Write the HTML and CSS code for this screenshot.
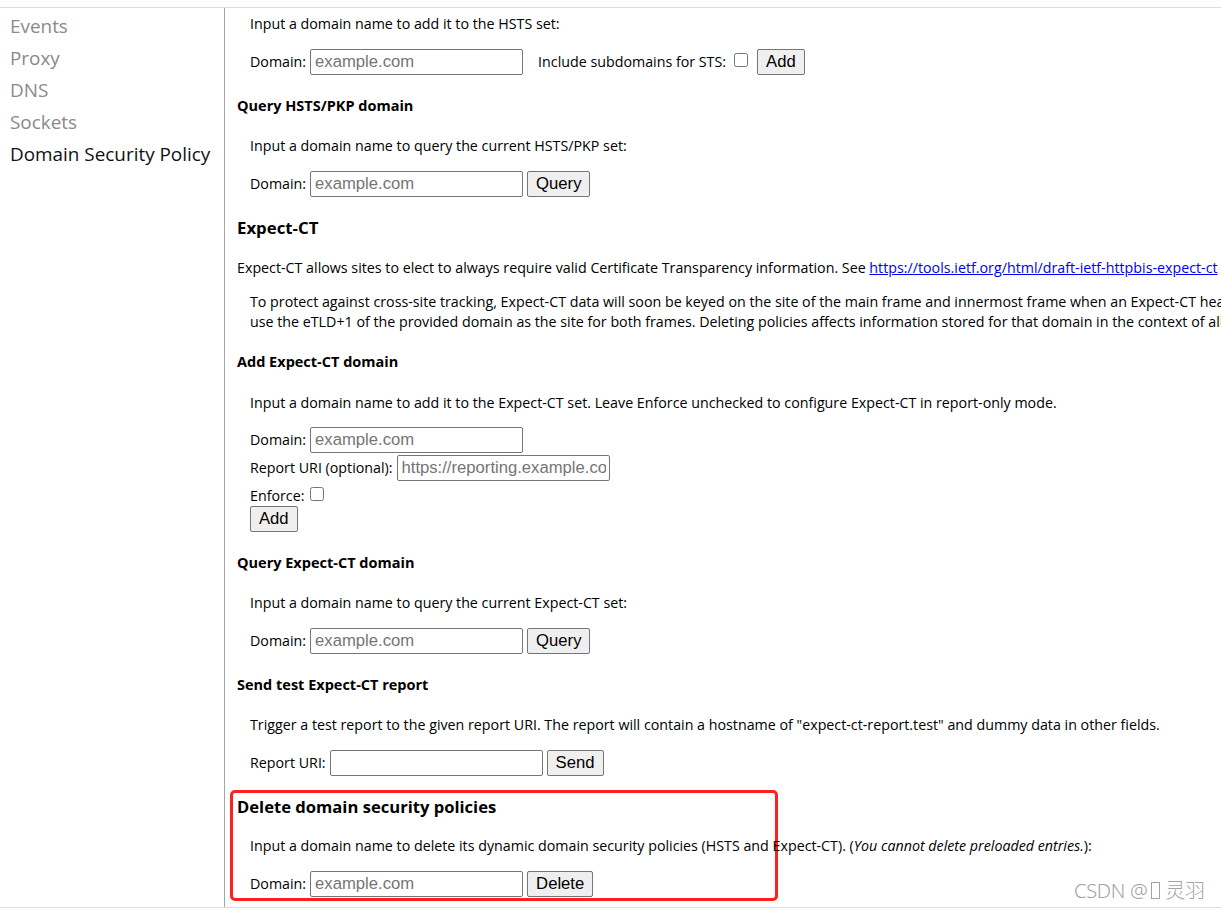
FILE: index.html
```html
<!DOCTYPE html>
<html lang="en">
<head>
<meta charset="utf-8">
<title>net-internals</title>
<link rel="stylesheet" href="styles.css">
</head>
<body>
<div class="frame">
  <nav class="sidebar">
    <div class="nav-item">Events</div>
    <div class="nav-item">Proxy</div>
    <div class="nav-item">DNS</div>
    <div class="nav-item">Sockets</div>
    <div class="nav-item nav-item-active">Domain Security Policy</div>
  </nav>
  <main class="content">
    <p class="text indent first">Input a domain name to add it to the HSTS set:</p>
    <div class="row indent">
      <span class="lbl">Domain:</span>
      <input class="field" type="text" placeholder="example.com">
      <span class="lbl lbl-sts">Include subdomains for STS:</span>
      <input class="check check-sts" type="checkbox">
      <button class="btn">Add</button>
    </div>

    <h4 class="h4">Query HSTS/PKP domain</h4>
    <p class="text indent">Input a domain name to query the current HSTS/PKP set:</p>
    <div class="row indent">
      <span class="lbl">Domain:</span>
      <input class="field" type="text" placeholder="example.com">
      <button class="btn">Query</button>
    </div>

    <h3 class="h3">Expect-CT</h3>
    <p class="text after-h3">Expect-CT allows sites to elect to always require valid Certificate Transparency information. See <a class="link" href="#">https://tools.ietf.org/html/draft-ietf-httpbis-expect-ct</a> for more information.</p>
    <p class="text indent note">To protect against cross-site tracking, Expect-CT data will soon be keyed on the site of the main frame and innermost frame when an Expect-CT header is received. When deleting or querying Expect-CT data, this page will<br>use the eTLD+1 of the provided domain as the site for both frames. Deleting policies affects information stored for that domain in the context of all sites.</p>

    <h4 class="h4 after-note">Add Expect-CT domain</h4>
    <p class="text indent gap-21">Input a domain name to add it to the Expect-CT set. Leave Enforce unchecked to configure Expect-CT in report-only mode.</p>
    <div class="row indent gap-14">
      <span class="lbl">Domain:</span>
      <input class="field" type="text" placeholder="example.com">
    </div>
    <div class="row indent gap-2">
      <span class="lbl">Report URI (optional):</span>
      <input class="field" type="text" placeholder="https://reporting.example.com">
    </div>
    <div class="enforce indent">
      <span class="lbl">Enforce:</span>
      <input class="check check-enforce" type="checkbox">
    </div>
    <div class="row indent gap-0">
      <button class="btn">Add</button>
    </div>

    <h4 class="h4">Query Expect-CT domain</h4>
    <p class="text indent">Input a domain name to query the current Expect-CT set:</p>
    <div class="row indent">
      <span class="lbl">Domain:</span>
      <input class="field" type="text" placeholder="example.com">
      <button class="btn">Query</button>
    </div>

    <h4 class="h4">Send test Expect-CT report</h4>
    <p class="text indent">Trigger a test report to the given report URI. The report will contain a hostname of "expect-ct-report.test" and dummy data in other fields.</p>
    <div class="row indent">
      <span class="lbl">Report URI:</span>
      <input class="field" type="text">
      <button class="btn">Send</button>
    </div>

    <section class="highlight">
      <h3 class="h3 h3-boxed">Delete domain security policies</h3>
      <p class="text indent gap-17">Input a domain name to delete its dynamic domain security policies (HSTS and Expect-CT). (<i>You cannot delete preloaded entries.</i>):</p>
      <div class="row indent">
        <span class="lbl">Domain:</span>
        <input class="field" type="text" placeholder="example.com">
        <button class="btn">Delete</button>
      </div>
    </section>
  </main>
</div>
<div class="watermark">CSDN @<span class="tofu"></span> 灵羽</div>
</body>
</html>
```

FILE: styles.css
```css
html, body {
  margin: 0;
  padding: 0;
  background: #ffffff;
}

body {
  font-family: "Open Sans", "Noto Sans", sans-serif;
  font-size: 14.25px;
  color: #000000;
  width: 1221px;
  height: 910px;
  overflow: hidden;
  position: relative;
}

.frame {
  margin-top: 7px;
  height: 901px;
  box-sizing: border-box;
  border-top: 1px solid #dcdcdc;
  border-bottom: 1px solid #dcdcdc;
  display: flex;
}

.sidebar {
  width: 225px;
  flex: none;
  box-sizing: border-box;
  border-right: 1px solid #a6a6a6;
  padding-top: 2px;
}

.nav-item {
  padding-left: 10px;
  font-size: 18.9px;
  line-height: 32px;
  height: 32px;
  color: #8a8a8a;
  white-space: nowrap;
}

.nav-item-active {
  color: #111111;
}

.content {
  flex: 1;
  min-width: 0;
  overflow: hidden;
  padding-left: 12px;
}

.text {
  margin: 20px 0 0 0;
  line-height: 20px;
  white-space: nowrap;
}

.indent {
  margin-left: 13px;
}

.first {
  margin-top: 6px;
}

.after-h3 {
  margin-top: 18px;
}

.note {
  margin-top: 14px;
}

.gap-21 { margin-top: 21px; }
.gap-17 { margin-top: 17px; }
.gap-14 { margin-top: 14px; }
.gap-2 { margin-top: 2px; }
.gap-0 { margin-top: 0; }

.link {
  color: #0000ee;
  text-decoration: underline;
}

.h4 {
  margin: 21px 0 0 0;
  font-size: 14.5px;
  font-weight: 700;
  line-height: 20px;
  white-space: nowrap;
}

.after-note {
  margin-top: 20px;
}

.h3 {
  margin: 19px 0 0 0;
  font-size: 16.8px;
  font-weight: 700;
  line-height: 24px;
  white-space: nowrap;
}

.h3-boxed {
  margin-top: 2px;
  font-size: 16.6px;
}

.row {
  margin-top: 15px;
  height: 26px;
  display: flex;
  align-items: center;
  gap: 4px;
  white-space: nowrap;
}

.row.gap-14 { margin-top: 14px; }
.row.gap-2 { margin-top: 2px; }
.row.gap-0 { margin-top: 0; }

.lbl {
  line-height: 20px;
}

.lbl-sts {
  margin-left: 11px;
}

.field {
  width: 213px;
  height: 26px;
  box-sizing: border-box;
  margin: 0;
  padding: 0 3px 0 4px;
  border: 1px solid #767676;
  border-radius: 2px;
  background: #ffffff;
  font-family: "Liberation Sans", Arial, sans-serif;
  font-size: 16.67px;
  color: #000000;
}

.field::placeholder {
  color: #757575;
}

.btn {
  height: 26px;
  box-sizing: border-box;
  margin: 0;
  padding: 0 8px;
  border: 1px solid #767676;
  border-radius: 2px;
  background: #efefef;
  font-family: "Liberation Sans", Arial, sans-serif;
  font-size: 16.67px;
  color: #000000;
  line-height: 24px;
}

.check {
  width: 14px;
  height: 14px;
  margin: 0;
  box-sizing: border-box;
}

.check-sts {
  align-self: flex-start;
  margin-top: 4px;
  margin-left: 4px;
  margin-right: 5px;
}

.enforce {
  margin-top: 5px;
  height: 20px;
  display: flex;
  align-items: flex-start;
  line-height: 20px;
}

.check-enforce {
  margin-top: 1px;
  margin-left: 6px;
}

.highlight {
  margin: 14px 0 0 -7px;
  width: 548px;
  box-sizing: border-box;
  border: 3px solid #ff1f1f;
  border-radius: 5px;
  padding: 0 0 1px 4px;
  overflow: visible;
}

.watermark {
  position: absolute;
  left: 1074px;
  top: 877px;
  font-family: "Noto Sans", "Noto Sans CJK SC", sans-serif;
  font-size: 20px;
  font-weight: 300;
  line-height: 28px;
  color: #a3a3a3;
  white-space: nowrap;
  letter-spacing: -0.3px;
}

.tofu {
  display: inline-block;
  width: 7px;
  height: 15px;
  margin-left: 4px;
  border: 1px solid #a3a3a3;
  vertical-align: -1px;
}
```
